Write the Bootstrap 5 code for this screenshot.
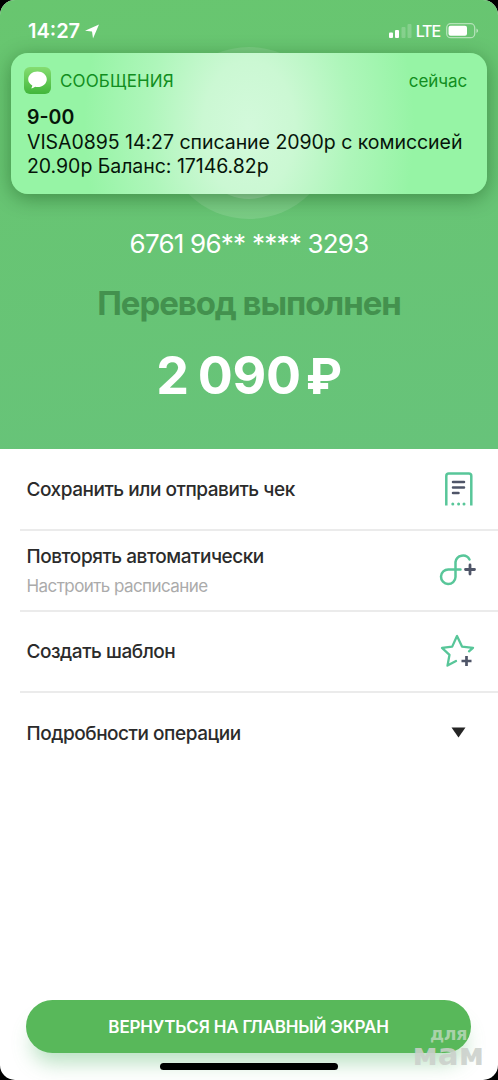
<!DOCTYPE html>
<html lang="ru">
<head>
<meta charset="utf-8">
<meta name="viewport" content="width=device-width, initial-scale=1">
<title>Перевод выполнен</title>
<link rel="stylesheet" href="https://cdn.jsdelivr.net/npm/bootstrap@5.3.0/dist/css/bootstrap.min.css">
<style>
body{background:#000;font-family:Inter,"Liberation Sans",sans-serif;color:#2b2b2b}
.screen{width:498px;height:1080px;border-radius:15px;background:#fff}
.hero{height:449px;background:linear-gradient(170deg,#68c66f,#67c37a);color:#fff}
.status{height:53px;padding:19px 19px 0 28px}
.clock{font-size:20px;font-weight:600;line-height:24px}
.lte{font-size:16px;font-weight:500;line-height:24px;letter-spacing:-1.1px;margin:0 6px 0 4px}
.halo{width:172px;height:172px;left:163px;top:47px;background:rgba(255,255,255,.12)}
.halo-core{width:104px;height:104px;left:34px;top:48px;background:rgba(255,255,255,.2)}
.notice{width:476px;height:141px;margin-left:11px;border-radius:17px;padding:14px 20px 0 16px;background:radial-gradient(ellipse 165px 240px at 238px 75px,#d3f9db 0,#cbf8d3 28%,#aef6ba 62%,#96f4a5 100%);box-shadow:0 4px 20px rgba(0,50,0,.38)}
.app-icon{width:27px;height:27px;margin-left:-3px}
.app-name,.when{font-size:17px;line-height:25px;color:#118e20;padding-top:2px}
.app-name{margin-left:9px;letter-spacing:.15px}
.when{letter-spacing:-.1px}
.sender{font-size:19.5px;font-weight:600;line-height:24px;color:#06150a;margin-top:11px}
.msg{font-size:19.5px;line-height:24px;color:#06150a;white-space:nowrap;letter-spacing:-.04px;padding-top:1px}
.cardno{font-size:26px;line-height:30px;margin-top:35px;letter-spacing:-.77px}
.done{font-size:33px;font-weight:700;line-height:40px;color:#43914e;margin-top:24px;letter-spacing:-1.08px}
.sum{font-size:52px;font-weight:700;line-height:60px;margin-top:23px;letter-spacing:-.3px;word-spacing:-3px}
.rub{margin-left:5px;font-size:49px}
.options{padding-top:1px}
.opt{height:81px;margin-left:20px;padding:1px 22px 0 6.500px;border-bottom:2px solid #ebebeb}
.opt:last-child{border:0}
.opt-title{font-size:19px;font-weight:500;line-height:26px;letter-spacing:-.46px}
.opt-sub{font-size:17px;line-height:24px;color:#ababab;letter-spacing:-.57px;margin-top:4px}
.home-btn{width:445px;height:53px;margin:0 0 27px 26px;padding-top:8px;font-size:17px;font-weight:600;letter-spacing:-.17px;color:#fff;background:#58b85a;box-shadow:0 16px 20px -6px rgba(88,184,110,.42)}
.indicator{width:178px;height:7px;left:160px;top:1063px;background:#000}
.watermark{right:14px;top:1026px;font-family:"DejaVu Sans",sans-serif;font-weight:700}
.wm-top{font-size:17.5px;line-height:16px;letter-spacing:-.4px;padding-right:17px;color:rgba(185,215,185,.85)}
.wm-main{font-size:31px;line-height:24px;color:rgba(203,208,203,.88)}
</style>
</head>
<body>
<main class="screen position-relative overflow-hidden d-flex flex-column">
  <section class="hero position-relative text-center flex-shrink-0">
    <div class="halo position-absolute rounded-circle"><div class="halo-core position-absolute rounded-circle"></div></div>
    <div class="status d-flex justify-content-between align-items-start position-relative">
      <div class="d-flex align-items-center"><span class="clock">14:27</span>
        <svg class="ms-1" width="16" height="16" viewBox="0 0 16 16"><path d="M15 1.500 1 7.800 8 8.400 9 15.500z" fill="#fff"/></svg></div>
      <div class="d-flex align-items-center">
        <svg width="23" height="16" viewBox="0 0 23 16" fill="#fff"><rect x="0" y="9.500" width="4" height="5.500" rx="1"/><rect x="6" y="7" width="4" height="8" rx="1"/><g opacity=".2"><rect x="12.500" y="4" width="4" height="11" rx="1"/><rect x="18.500" y="1" width="4" height="14" rx="1"/></g></svg>
        <span class="lte">LTE</span>
        <svg width="33" height="16" viewBox="0 0 33 16"><rect x=".7" y=".7" width="28" height="14" rx="4" fill="none" stroke="#fff" stroke-opacity=".5" stroke-width="1.300"/><rect x="2.500" y="2.700" width="18.500" height="10" rx="2" fill="#fff"/><path d="M30.500 5.500q3 2.200 0 4.500z" fill="#fff" opacity=".6"/></svg>
      </div>
    </div>
    <article class="notice position-relative text-start">
      <div class="d-flex align-items-center">
        <svg class="app-icon" viewBox="0 0 27 27"><defs><linearGradient id="ig" x2="0" y2="1"><stop stop-color="#85dd71"/><stop offset="1" stop-color="#42b63b"/></linearGradient></defs><rect width="27" height="27" rx="6" fill="url(#ig)"/><path d="M13.500 4.500c5.200 0 9.300 3.400 9.300 7.800s-4.100 7.800-9.300 7.800q-1.200 0-2.400-.3c-1 .9-2.400 1.500-4 1.500q1.200-1.300 1.200-2.700c-2.500-1.400-4.100-3.700-4.100-6.300 0-4.400 4.100-7.800 9.300-7.800z" fill="#fff"/></svg>
        <span class="app-name">СООБЩЕНИЯ</span><span class="when ms-auto">сейчас</span>
      </div>
      <div class="sender">9-00</div>
      <div class="msg">VISA0895 14:27 списание 2090р с комиссией<br>20.90р Баланс: 17146.82р</div>
    </article>
    <div class="cardno">6761 96** **** 3293</div>
    <div class="done">Перевод выполнен</div>
    <div class="sum">2 090<span class="rub">₽</span></div>
  </section>
  <section class="options">
    <div class="opt d-flex align-items-center justify-content-between"><span class="opt-title">Сохранить или отправить чек</span>
      <svg width="36" height="36" viewBox="0 0 36 36" fill="none" stroke="#58c699" stroke-width="2.500"><path d="M6.300 33.500V4q0-2.500 2.500-2.500h20q2.500 0 2.500 2.500v29.500"/><path d="M12.800 32h.01M18.600 32h.01M24 32h.01" stroke-linecap="round" stroke-width="3"/><path d="M13 10h11M13 15.500h11M13 21h5.500" stroke="#4f5568" stroke-linecap="round"/></svg>
    </div>
    <div class="opt d-flex align-items-center justify-content-between"><div class="d-flex flex-column"><span class="opt-title">Повторять автоматически</span><span class="opt-sub">Настроить расписание</span></div>
      <svg width="38" height="36" viewBox="0 1.500 38 36" fill="none" stroke="#58c699" stroke-width="2.500" stroke-linecap="round"><path d="M31.500 8A7.500 7.500 0 0 0 17.500 10.500V25.500A7.250 7.250 0 1 1 10.500 18H22.500"/><path d="M32 13.500v9M27.500 18h9" stroke="#4f5568" stroke-width="2.800"/></svg>
    </div>
    <div class="opt d-flex align-items-center justify-content-between"><span class="opt-title">Создать шаблон</span>
      <svg width="36" height="36" viewBox="0 0 36 36" fill="none" stroke="#58c699" stroke-width="2.300" stroke-linecap="round" stroke-linejoin="round"><path d="M29 17.300 33 13.800 22 12.600 17 2 12.200 12.600 2 13.800 9.500 20.800 7.500 31.600 16 27"/><path d="M26.500 22v10M21.500 27h10" stroke="#4f5568" stroke-width="2.700" stroke-linecap="butt"/></svg>
    </div>
    <div class="opt d-flex align-items-center justify-content-between"><span class="opt-title">Подробности операции</span>
      <svg class="mb-1" width="36" height="12" viewBox="0 0 36 12"><path d="M11.500 1.500h14L18.500 11.500z" fill="#252525"/></svg>
    </div>
  </section>
  <button class="home-btn btn rounded-pill mt-auto flex-shrink-0">ВЕРНУТЬСЯ НА ГЛАВНЫЙ ЭКРАН</button>
  <div class="indicator position-absolute rounded-pill"></div>
  <div class="watermark position-absolute text-end"><div class="wm-top">для</div><div class="wm-main">мам</div></div>
</main>
<script src="https://cdn.jsdelivr.net/npm/bootstrap@5.3.0/dist/js/bootstrap.bundle.min.js"></script>
</body>
</html>
